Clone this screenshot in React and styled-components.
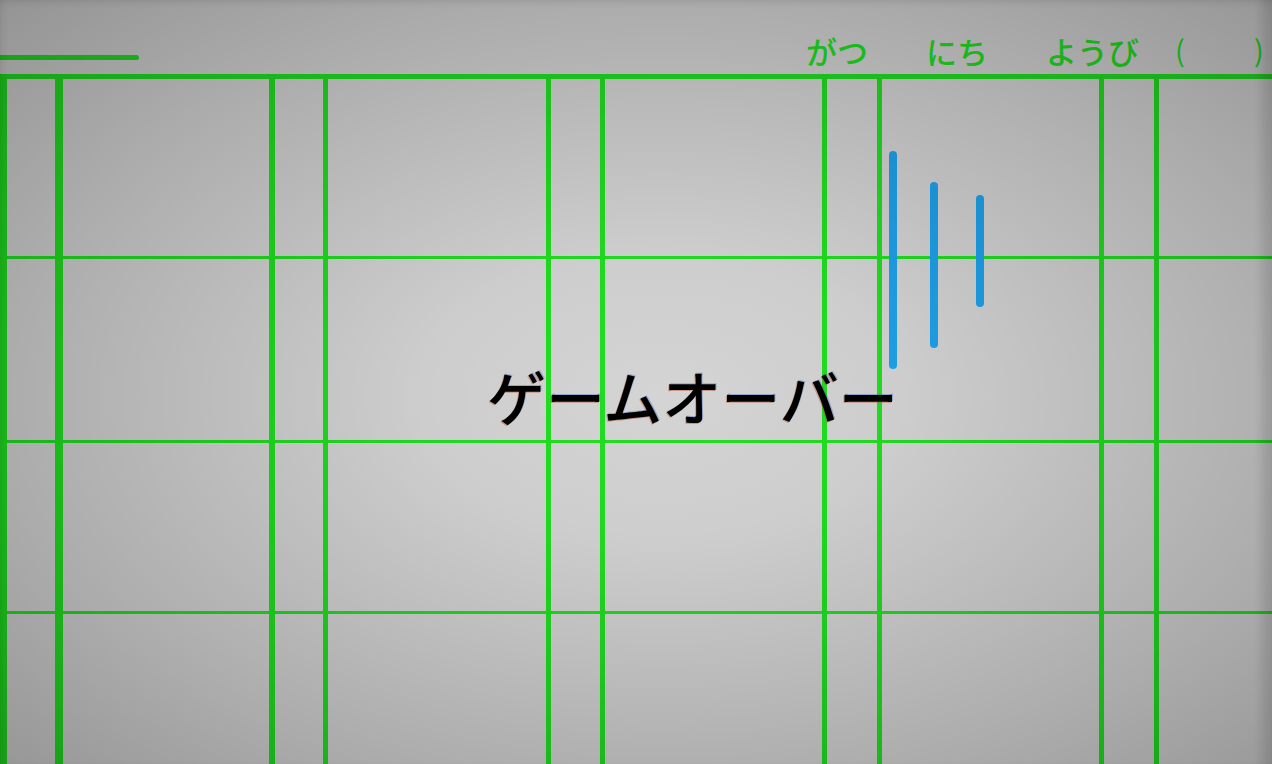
import styled, { createGlobalStyle } from "styled-components";

const GlobalStyle = createGlobalStyle`
  html, body {
    margin: 0;
    padding: 0;
    overflow: hidden;
  }
  body {
    font-family: "Noto Sans CJK JP", "Noto Sans", sans-serif;
  }
`;

const LINE = "#21df21";

const Screen = styled.div`
  position: relative;
  display: flex;
  flex-direction: column;
  width: 100vw;
  height: 100vh;
  background: #d4d4d4;
  overflow: hidden;
`;

const Header = styled.header`
  display: flex;
  align-items: flex-start;
  height: 74px;
`;

const TitleLine = styled.div`
  width: 139px;
  height: 5px;
  margin-top: 55px;
  border-radius: 0 3px 3px 0;
  background: ${LINE};
`;

const DateLabels = styled.div`
  display: flex;
  align-items: flex-start;
  margin-left: 667px;
  padding-top: 32px;
  color: ${LINE};
  font-size: 31px;
  font-weight: 500;
  line-height: 1.2;
`;

const Label = styled.span`
  width: ${(p) => p.$width}px;
`;

const Paren = styled.span`
  width: ${(p) => p.$width}px;
  font-size: 29px;
  font-weight: 400;
  line-height: 1.2;
`;

const Table = styled.div`
  flex: 1;
  display: grid;
  grid-template-columns: 55px 214px 54px 223px 54px 222px 55px 222px 55px 1fr;
  grid-template-rows: 180px 184px 171px 1fr;
  border-top: 5px solid ${LINE};
`;

const Cell = styled.div`
  border-left: ${(p) => p.$left}px solid ${LINE};
  border-bottom: ${(p) => (p.$last ? 0 : 3)}px solid ${LINE};
`;

const GameOver = styled.div`
  position: absolute;
  left: 487px;
  top: 361px;
  color: #000;
  font-size: 59px;
  font-weight: 500;
  line-height: 1.2;
  text-shadow: -1px 1px 0 rgba(190, 80, 40, 0.45),
    1px -1px 0 rgba(40, 90, 200, 0.35);
`;

const Marks = styled.svg`
  position: absolute;
  left: 880px;
  top: 140px;
  width: 120px;
  height: 240px;
`;

const Vignette = styled.div`
  position: absolute;
  inset: 0;
  pointer-events: none;
  background: radial-gradient(
    ellipse farthest-corner at 52% 52%,
    rgba(0, 0, 0, 0) 0%,
    rgba(0, 0, 0, 0.03) 25%,
    rgba(0, 0, 0, 0.19) 70%,
    rgba(0, 0, 0, 0.3) 100%
  );
  box-shadow: inset -18px 0 10px -8px rgba(0, 0, 0, 0.12),
    inset 0 6px 6px -3px rgba(0, 0, 0, 0.08),
    inset 6px 0 6px -3px rgba(0, 0, 0, 0.06);
`;

const columnBorders = [7, 8, 6, 5, 5, 5, 5, 5, 5, 5];
const rows = [0, 1, 2, 3];

export default function App() {
  return (
    <>
      <GlobalStyle />
      <Screen>
        <Header>
          <TitleLine />
          <DateLabels>
            <Label $width={120}>がつ</Label>
            <Label $width={120}>にち</Label>
            <Label $width={129}>ようび</Label>
            <Paren $width={79}>(</Paren>
            <Paren $width={12}>)</Paren>
          </DateLabels>
        </Header>
        <Table>
          {rows.map((r) =>
            columnBorders.map((w, c) => (
              <Cell key={`${r}-${c}`} $left={w} $last={r === rows.length - 1} />
            ))
          )}
        </Table>
        <GameOver>ゲームオーバー</GameOver>
        <Marks viewBox="0 0 120 240">
          <g stroke="#1ea2ec" strokeWidth="8" strokeLinecap="round">
            <line x1="13" y1="15" x2="13" y2="225" />
            <line x1="54" y1="46" x2="54" y2="204" />
            <line x1="100" y1="59" x2="100" y2="163" />
          </g>
        </Marks>
        <Vignette />
      </Screen>
    </>
  );
}
